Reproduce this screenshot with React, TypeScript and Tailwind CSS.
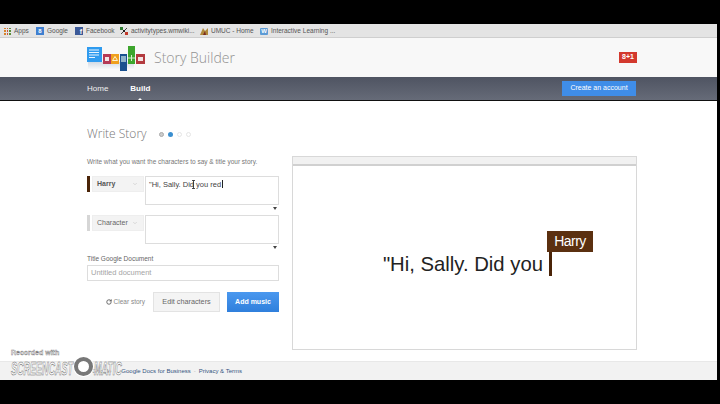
import { RotateCw, ChevronDown } from 'lucide-react'

const font = { sans: 'font-["Liberation_Sans",Arial,sans-serif]' }

function Logo() {
  return (
    <svg width="60" height="32" viewBox="0 -4 60 32" className="shrink-0">
      <defs>
        <linearGradient id="shade" x1="0" y1="0" x2="0" y2="1">
          <stop offset="0" stopColor="#b9c7d8" />
          <stop offset="1" stopColor="#ffffff" />
        </linearGradient>
      </defs>
      <rect x="1" y="16" width="46" height="8" fill="url(#shade)" opacity="0.6" />
      <rect x="0" y="1" width="15" height="15" fill="#2f9bef" />
      <path d="M2 4h10M2 6.500h10M2 9h10M2 11.500h6" stroke="#e8f4ff" strokeWidth="1" />
      <rect x="16" y="8" width="8" height="10" fill="#b53a57" />
      <rect x="18" y="11" width="4" height="4" fill="#f3e6e6" />
      <rect x="24" y="8" width="8" height="10" fill="#f0a01e" />
      <path d="M28 10.500l2.500 4h-5z" fill="none" stroke="#fff3d0" strokeWidth="1" />
      <rect x="33" y="8" width="7" height="17" fill="#19508f" />
      <rect x="34" y="10" width="5" height="6" fill="#8fb3c9" />
      <rect x="41" y="0" width="7" height="18" fill="#3da52d" />
      <path d="M41 12h7M44.500 9v6" stroke="#d6f0cf" strokeWidth="1" />
      <rect x="49" y="8" width="9" height="10" fill="#b33a3f" />
      <rect x="51" y="11" width="5" height="4" fill="#f3e2e2" />
    </svg>
  )
}

function Bookmark({ icon, label, width }: { icon: React.ReactNode; label: string; width: string }) {
  return (
    <div className={`flex items-center gap-[3px] ${width}`}>
      {icon}
      <span className="whitespace-nowrap text-[6.500px] text-[#555]">{label}</span>
    </div>
  )
}

function CharacterRow({ name, flag, selectColor, children }: { name: string; flag: string; selectColor: string; children?: React.ReactNode }) {
  return (
    <div className="flex">
      <div className={`h-[16px] w-[3px] shrink-0 ${flag}`} />
      <div className="ml-[2px] flex h-[16px] w-[52px] shrink-0 items-center justify-between border border-[#eeeeee] bg-[#f3f3f3] pr-[5px] pl-[4px]">
        <span className={`text-[7px] ${selectColor}`}>{name}</span>
        <ChevronDown size={6} className="text-[#bbbbbb]" />
      </div>
      <div className="relative ml-[1px] flex-1">
        <div className="h-[29px] border border-[#dddddd] bg-white pt-[2px] pl-[3px] text-[7.500px] leading-[10px] text-[#444]">{children}</div>
        <div className="absolute right-[2px] top-[31px] h-0 w-0 border-x-[2px] border-t-[3px] border-x-transparent border-t-[#444]" />
      </div>
    </div>
  )
}

export default function App() {
  return (
    <div className={`flex h-[404px] w-[720px] flex-col bg-black ${font.sans}`}>
      <div className="relative mt-[24px] flex h-[356px] w-[717px] grow-0 flex-col bg-white">
        {/* Bookmarks bar */}
        <div className="flex h-[14px] shrink-0 items-center border-b border-[#cfcfcf] bg-[#e4e4e4] pt-[1px] pl-[4px]">
          <Bookmark
            width="w-[32px]"
            label="Apps"
            icon={<span className="grid h-[7px] w-[7px] grid-cols-3 gap-[1px]">{Array.from({ length: 9 }).map((_, i) => <i key={i} className={i % 3 === 0 ? 'bg-[#d9822b]' : i % 3 === 1 ? 'bg-[#c9543a]' : 'bg-[#5b8f3a]'} />)}</span>}
          />
          <Bookmark
            width="w-[39px]"
            label="Google"
            icon={<span className="flex h-[8px] w-[8px] items-center justify-center bg-[#3f7fd0] text-[6px] font-bold text-white">8</span>}
          />
          <Bookmark
            width="w-[45px]"
            label="Facebook"
            icon={<span className="flex h-[8px] w-[8px] items-end justify-end bg-[#3b5998] pr-[1px] text-[7px] font-bold leading-[7px] text-white">f</span>}
          />
          <Bookmark
            width="w-[80px]"
            label="activitytypes.wmwiki..."
            icon={<svg width="8" height="8" viewBox="0 0 8 8"><path d="M1 1l6 6M7 1L1 7" stroke="#444" strokeWidth="1" /><rect x="0" y="0" width="3" height="3" fill="#2f7d32" /><rect x="5" y="5" width="3" height="3" fill="#c23a2b" /><rect x="3" y="3" width="2" height="2" fill="#222" /></svg>}
          />
          <Bookmark
            width="w-[60px]"
            label="UMUC - Home"
            icon={<svg width="8" height="8" viewBox="0 0 8 8"><path d="M0 8l3-7 2 3 3-3v7z" fill="#b08a3c" /><path d="M3 8l2-4 1 4z" fill="#7a2b22" /></svg>}
          />
          <Bookmark
            width="w-[80px]"
            label="Interactive Learning ..."
            icon={<span className="flex h-[7px] w-[8px] items-center justify-center rounded-[1px] bg-[#5d9bd5] text-[6px] font-bold leading-none text-white">W</span>}
          />
        </div>

        {/* Site header */}
        <header className="flex h-[39px] shrink-0 items-center justify-between bg-[#f8f8f8] pr-[80px] pl-[87px]">
          <div className="flex items-center gap-[7px]">
            <Logo />
            <span className="font-['Open_Sans',sans-serif] text-[14px] font-light text-[#929292]">Story Builder</span>
          </div>
          <div className="flex h-[11px] w-[18px] items-center justify-center bg-[#d3392e] text-[7px] font-bold text-white">8+1</div>
        </header>

        {/* Nav */}
        <nav className="flex h-[23px] shrink-0 items-center justify-between bg-gradient-to-b from-[#4f5462] to-[#666b78] pr-[81px] pl-[87px]">
          <div className="flex gap-[22px] pt-[1px] text-[8px] text-[#f0f0f0]">
            <span>Home</span>
            <span className="relative font-bold text-white">
              Build
              <span className="absolute left-[8px] top-[15px] h-0 w-0 border-x-[2px] border-b-[2px] border-x-transparent border-b-white" />
            </span>
          </div>
          <div className="flex h-[15px] w-[74px] items-center justify-center bg-[#3f8de8] text-[7px] text-white">Create an account</div>
        </nav>
        <div className="h-[1px] shrink-0 bg-[#111]" />

        {/* Main */}
        <main className="flex min-h-0 flex-1 gap-[13px] pl-[87px]">
          <section className="flex w-[192px] shrink-0 flex-col">
            <div className="mt-[25px] flex h-[16px] items-center">
              <h1 className="font-['Open_Sans',sans-serif] text-[12px] font-light text-[#777]">Write Story</h1>
              <div className="ml-[12px] flex gap-[4px]">
                <span className="h-[5px] w-[5px] rounded-full border border-[#aaa] bg-[#ccc]" />
                <span className="h-[5px] w-[5px] rounded-full bg-[#3a8fd0]" />
                <span className="h-[5px] w-[5px] rounded-full border border-[#e5e5e5] bg-white" />
                <span className="h-[5px] w-[5px] rounded-full border border-[#e5e5e5] bg-white" />
              </div>
            </div>
            <p className="mt-[16px] text-[6.500px] leading-[8px] text-[#777]">Write what you want the characters to say &amp; title your story.</p>
            <div className="mt-[10px] flex flex-col gap-[10px]">
              <CharacterRow name="Harry" flag="bg-[#4a2408]" selectColor="font-bold text-[#555]">
                <span className="relative">
                  "Hi, Sally. Did you red<span className="ml-[1px] inline-block h-[8px] w-px translate-y-[1px] bg-[#222]" />
                  {/* mouse I-beam */}
                  <svg width="5" height="9" viewBox="0 0 5 9" className="absolute left-[42px] top-[0px]">
                    <path d="M1 .5h3M2.500 .5v8M1 8.500h3" stroke="#222" strokeWidth="0.8" fill="none" />
                  </svg>
                </span>
              </CharacterRow>
              <CharacterRow name="Character" flag="bg-[#d6d6d6]" selectColor="text-[#666]" />
            </div>
            <label className="mt-[11px] text-[6.500px] leading-[8px] text-[#666]">Title Google Document</label>
            <div className="mt-[2px] flex h-[16px] items-center border border-[#dddddd] pl-[3px] text-[7.500px] text-[#a5a5a5]">Untitled document</div>
            <div className="mt-[11px] flex items-center justify-end">
              <div className="mr-[8px] flex items-center gap-[2px] text-[6.500px] text-[#888]">
                <RotateCw size={6} strokeWidth={3} className="text-[#444]" />
                Clear story
              </div>
              <div className="flex h-[20px] w-[67px] items-center justify-center border border-[#e3e3e3] bg-[#f4f4f4] text-[7.250px] text-[#666]">Edit characters</div>
              <div className="ml-[7px] flex h-[20px] w-[52px] items-center justify-center bg-gradient-to-b from-[#4a98ef] to-[#2f7fdc] text-[7px] font-bold text-white">Add music</div>
            </div>
          </section>

          <section className="mt-[55px] flex h-[194px] w-[345px] shrink-0 flex-col border border-[#d8d8d8]">
            <div className="h-[9px] shrink-0 border-b-2 border-[#d0d0d0] bg-[#f1f1f1]" />
            <div className="flex flex-1 items-start justify-end pr-[43px]">
              <div className="mt-[65px] flex items-start">
                <span className="mt-[21px] mr-[4px] whitespace-nowrap text-[20.300px] leading-[24px] text-[#222]">"Hi, Sally. Did you</span>
                <div className="flex w-[46px] flex-col">
                  <div className="flex h-[21px] items-center justify-center bg-[#5b3010] text-[14px] tracking-[-0.5px] text-white">Harry</div>
                  <div className="ml-[2px] h-[24px] w-[3px] bg-[#4a2408]" />
                </div>
              </div>
            </div>
          </section>
        </main>

        {/* Footer */}
        <footer className="flex h-[19px] shrink-0 items-center border-t border-[#e8e8e8] bg-[#f2f2f2] pl-[92px] text-[6px]">
          <span className="text-[#777]">Google</span>
          <span className="mx-[3px] text-[#bbb]">-</span>
          <span className="ml-[2px] text-[#35557f]">Google Docs for Business</span>
          <span className="mx-[3px] text-[#bbb]">-</span>
          <span className="text-[#35557f]">Privacy &amp; Terms</span>
        </footer>

        {/* Screencast-O-Matic watermark */}
        <div className="absolute left-[11px] top-[325px] text-white">
          <div className="text-[7px] font-bold leading-[8px] [-webkit-text-stroke:0.4px_#777]">Recorded with</div>
          <div className="flex items-center text-[18px] font-bold italic leading-[18px] [-webkit-text-stroke:0.6px_#666]">
            <span className="w-[62px] origin-left scale-x-[0.5] whitespace-nowrap">SCREENCAST</span>
            <span className="mx-[1px] mb-[4px] h-[19px] w-[19px] shrink-0 rounded-full border-[4px] border-[#777] bg-white ring-1 ring-white" />
            <span className="w-[31px] origin-left scale-x-[0.5] whitespace-nowrap">MATIC</span>
          </div>
        </div>
      </div>
    </div>
  )
}
